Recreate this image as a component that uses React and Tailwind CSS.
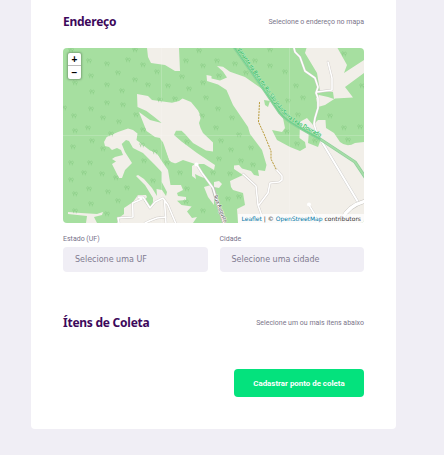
const TREES = [
  [71,50],[89,61],[107,64],[128,60],[118,73],[135,50],[143,65],[91,76],[107,85],[135,80],[148,85],[157,72],[75,83],[92,92],[122,91],[107,103],[91,109],[123,105],[136,115],[160,100],[64,108],[74,116],[103,118],[119,122],[75,131],[88,128],[111,134],[143,130],[199,51],[186,61],[203,66],[217,61],[235,64],[255,61],[246,73],[182,77],[168,86],[189,89],[203,83],[219,76],[206,98],[175,99],[218,109],[232,118],[216,128],[202,116],[239,135],[270,50],[285,72],[296,86],[270,66],[303,98],[288,101],[344,54],[362,86],[330,116],[344,128],[360,127],[298,115],
  [73,147],[92,141],[103,149],[71,163],[90,163],[84,173],[102,174],[71,180],[75,194],[89,189],[108,192],[91,204],[75,211],[107,214],[118,201],[127,188],[142,145],[144,161],[155,152],[153,181],[116,178],[187,142],[221,141],[231,150],[219,159],[251,148],[241,161],[253,165],[167,163],[180,173],[213,173],[230,174],[187,189],[186,202],[203,211],[228,199],[239,197],[287,132],[297,144],[315,141],[348,140]
];

const FOREST = "#a6dfa0";
const LAND = "#f2efe9";
const LOCAL_ROADS =
  "M294 48L295 52L300 57L305 71L315 78L318 87L316 93L318 98V108L315 118L314 124L318 137M328 62L332 78V90L317 92M197 165L202 173L213 188L216 198L224 223M243 174L256 186L258 205L264 222M276 169L282 176V180L279 182L270 183L268 193L259 205M309 205L315 215L318 224M119 223L118 218L133 217L132.700 203L142 199L138 197L143 197L150 208L155 202L163 198L168 205L176 224M164.500 200L166 224M145 223Q151 220 157 218L166 217";
const HIGHWAY = "M234 47L263 88L280 113Q286 120 297 126L320 139L355 162L365 177";

function Map() {
  return (
    <svg className="block h-full w-full" viewBox="63 48 301 175" aria-hidden="true">
      <defs>
        <g id="tree" fill="none" stroke="#86c982" strokeWidth=".5">
          <path d="M-1.300 2.200V-.5M1.300 2.400V0M-2.300-1C-2.300-2.700-.2-2.700-.2-1S-2.300.8-2.300-1M.3-.6C.3-2.400 2.400-2.400 2.400-.6S.3 1 .3-.6" />
        </g>
        <path id="highway" d="M237 49.500L264.500 89L280.500 111Q287 118.500 297 124.500L330 142.500" />
        <path id="street" d="M213.500 196L225 225" />
      </defs>
      <rect x="63" y="48" width="301" height="175" fill={FOREST} />
      <g fill={LAND}>
        <path d="M147 48L148 57L151 63L165 65L175 71H180L179 48Z" />
        <path d="M137 94L148 96L152 100L172 102.700L179 101L182.500 98.500L191 102L198 110.500L201 117L199 123Q200 128 203 133L213 142.500V151.500L206 150.500L193 143L185 134L181.500 130.700H176L174 135L181.500 141.500L197 153L215 165L214 170L204 164L195 164L183 160L176.500 163Q172 164 169 160L163 145L160 138L155 137L146.500 131L139 112L150 120L161.700 123L155 117.500L146.500 111L137.500 107Z" />
        <path d="M192 166L195 164L202 173L204 178L199 176L195 174L196 179L192 176ZM204 187L211 185L214 197V205L208 197Z" />
        <path d="M104 142L106.700 137L118 132L128 128.500L133 130L137.500 133.500L136.500 140L150 150.500L157 153L161 160L168 170L170.500 185H181L183 190L177 193L178 196L186 197V200L177 200.700L181.500 205L191.700 206.500L187 211.500L192 218L197 217L193 223H117L120 217L124 214V208L133 202L138 195H146L147 197L144 201L150 208L153 202V198L145 185L136 176L138 175L144 179L152 188L157 196L156.500 189L162 190L166 196L167 192L161.700 182V172L154 164L143 153L133 148L129 141L126 140L121.700 144L125 152L132 163L125 170L122 178H119L112 164L116 161.500L112 159L115 157L123 155L121 150L117 148L112 150L109 147L105 146Z" />
        <path d="M206.500 75L211.500 76V78.500L220 80.500L227 77.500L223 71.500L217 66L223 66.700L230 71.700L245 77L265 91L280 114L283 118L285 128L282 132L272 130L277 140L290 147L300 151L306 147.500L305 142L299.500 138L300 121.700L307 118L313 125L318 120H325.500L326 128L334 133L340 142Q347 148 355 143L364 142V223H238L237 209L245 205L243 193L233 190L231 187L230 181L243 175L234 169V165.500L239 165L242 168.500L251 171L254 175L259 176L258 170L265 171L266.500 165L262 150L250 134L248 127L233 105L226.500 90L218 84.500L207 81Z" />
        <path d="M306.500 48H337.500L347 65L344 73L364 60V73L345 87L353 97.500L335 98.500L325 105L318 107L316 98L319 95L328 97L334 99L333 92L320 91L317 73L305 53Z" />
        <path d="M214 182L219 181L222 184L219 188L214 187Z" />
        <path d="M68 212L81 213L97 214L103 212L102 215L94 217L97 223H86L87 216L68 214Z" />
      </g>
      <path d="M309 131L308 143L318 147L321 139ZM264 100L270 101L268 107L265 105ZM155 138Q163 139 164 145L169 160L163 161L158 155L155 152Z" fill={FOREST} />
      {TREES.map(([x, y]) => (
        <use key={`${x}-${y}`} href="#tree" x={x} y={y} />
      ))}
      <path d="M161.500 48V223M289.500 48V223M63 135.500H364" stroke="#fff" strokeOpacity=".25" strokeWidth=".7" />
      <g fill="none" strokeLinecap="round" strokeLinejoin="round">
        <path d={LOCAL_ROADS} stroke="#d0ccc8" strokeWidth="2.400" />
        <path d="M213 188L216 198L224 223" stroke="#c3bfbc" strokeWidth="3.600" />
        <path d={LOCAL_ROADS} stroke="#fff" strokeWidth="1.600" />
        <path d="M322 142L358 202" stroke="#ccc" strokeWidth="2.700" />
        <path d="M322 142L358 202" stroke="#fff" strokeWidth="2" />
        <path d="M342 219Q349 205 366 201" stroke="#c5c2bd" strokeWidth="4.300" />
        <path d="M342 219Q349 205 366 201" stroke="#fff" strokeWidth="3.400" />
        <path d="M259.500 102.500L258.500 122L264 134L271 151V159L276 169" stroke="#b99b3b" strokeWidth="1" strokeDasharray="1.300 1.700" />
        <path d={HIGHWAY} stroke="#8fd09a" strokeWidth="3.200" />
        <path d={HIGHWAY} stroke="#a6dca8" strokeWidth="1.800" />
        <path d="M234 47L263 88L280 113Q286 120 297 126L320 139" stroke="#74d18d" strokeWidth="1.500" />
      </g>
      <circle cx="196.500" cy="164.500" r="2" fill="#fff" />
      <circle cx="309" cy="204.500" r="2" fill="#fff" />
      <text fill="#1fb45a" stroke="#c9f3cd" strokeWidth=".6" paintOrder="stroke" className="font-['Noto_Sans',sans-serif] text-[5.800px] font-medium">
        <textPath href="#highway" textLength="123" lengthAdjust="spacingAndGlyphs">Variante da Boca do Rio São João/Serra Leão Dourado</textPath>
      </text>
      <text fill="#444" stroke="#fff" strokeWidth=".7" paintOrder="stroke" className="font-['Noto_Sans',sans-serif] text-[5.500px]">
        <textPath href="#street" textLength="29" lengthAdjust="spacingAndGlyphs">Rua Augusto</textPath>
      </text>
    </svg>
  );
}

function SectionHeader({ title, hint }) {
  return (
    <div className="flex h-4 items-center justify-between">
      <h2 className="font-['Noto_Sans',sans-serif] text-[12px] leading-4 font-bold tracking-[-0.25px] text-[#3d085b]">{title}</h2>
      <span className="text-[7px] leading-4 text-[#7b758a]">{hint}</span>
    </div>
  );
}

function Field({ label, placeholder }) {
  return (
    <div className="flex-1">
      <div className="h-3 text-[7px] leading-2 text-[#77718a]">{label}</div>
      <div className="flex h-[25px] items-center rounded bg-[#f0eef5] px-3 font-['DejaVu_Sans_Condensed','DejaVu_Sans',sans-serif] text-[8.900px] text-[#817b91]">{placeholder}</div>
    </div>
  );
}

export default function App() {
  return (
    <div className="h-[455px] w-[444px] overflow-hidden bg-[#f0eef5] font-[Roboto,sans-serif]">
      <main className="ml-[31px] h-[429px] w-[365px] rounded-b bg-white px-8 pt-3.5">
        <SectionHeader title="Endereço" hint="Selecione o endereço no mapa" />
        <div className="relative mt-[18px] h-[175px] overflow-hidden rounded">
          <Map />
          <div className="absolute top-[5px] left-[5px] flex w-[13px] flex-col rounded-[2px] bg-white text-center font-['Liberation_Sans',sans-serif] text-[10px] font-bold text-black shadow-[0_0_2px_1px_rgba(0,0,0,.25)]">
            <button className="h-[13px] border-b border-[#bbb] leading-[13px]">+</button>
            <button className="h-[13px] leading-[12px]">−</button>
          </div>
          <div className="absolute right-0 bottom-0 flex h-[9px] items-center bg-white/75 px-[3px] font-['DejaVu_Sans',sans-serif] text-[6px] whitespace-pre text-[#333]">
            <span className="text-[#0078a8]">Leaflet</span> | © <span className="text-[#0078a8]">OpenStreetMap</span> contributors
          </div>
        </div>
        <div className="mt-3 flex gap-3">
          <Field label="Estado (UF)" placeholder="Selecione uma UF" />
          <Field label="Cidade" placeholder="Selecione uma cidade" />
        </div>
        <div className="mt-[43px]">
          <SectionHeader title="Ítens de Coleta" hint="Selecione um ou mais ítens abaixo" />
        </div>
        <button className="mt-[38px] ml-auto block h-7 w-[130px] rounded bg-[#04e27d] pt-px text-[7.900px] font-bold text-white">Cadastrar ponto de coleta</button>
      </main>
    </div>
  );
}
